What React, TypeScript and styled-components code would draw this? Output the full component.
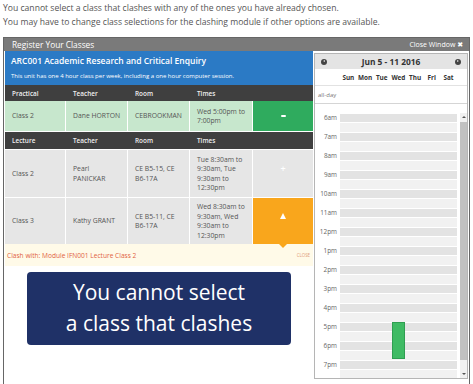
import React from "react";
import styled, { createGlobalStyle } from "styled-components";

const GlobalStyle = createGlobalStyle`
  html, body {
    margin: 0;
    padding: 0;
    background: #fff;
    overflow: hidden;
  }
  body {
    font-family: "Open Sans", "Liberation Sans", sans-serif;
    color: #555;
  }
`;

const COLS = "60px 61px 61px 62px 60px";
const HOURS = ["6am", "7am", "8am", "9am", "10am", "11am", "12pm", "1pm", "2pm", "3pm", "4pm", "5pm", "6pm", "7pm"];
const DAYS = ["Sun", "Mon", "Tue", "Wed", "Thu", "Fri", "Sat"];

type Tone = "green" | "gray" | "orange";

const cellBg = (t: Tone) => (t === "green" ? "#c7e7cd" : "#e6e6e6");
const actionBg = (t: Tone) =>
  t === "green" ? "#2fab5e" : t === "orange" ? "#f9a61c" : "#e6e6e6";

function App() {
  return (
    <>
      <GlobalStyle />
      <Intro>
        <p>You cannot select a class that clashes with any of the ones you have already chosen.</p>
        <p>You may have to change class selections for the clashing module if other options are available.</p>
      </Intro>
      <Panel>
        <TitleBar>
          <span>Register Your Classes</span>
          <CloseWin>
            Close Window <i>✖</i>
          </CloseWin>
        </TitleBar>
        <Body>
          <Main>
            <ModuleHead>
              <h2>ARC001 Academic Research and Critical Enquiry</h2>
              <p>This unit has one 4 hour class per week, including a one hour computer session.</p>
            </ModuleHead>

            <HeadRow $h={16}>
              <span>Practical</span>
              <span>Teacher</span>
              <span>Room</span>
              <span>Times</span>
              <span />
            </HeadRow>
            <DataRow $h={30}>
              <Cell $tone="green">Class 2</Cell>
              <Cell $tone="green">Dane HORTON</Cell>
              <Cell $tone="green">CEBROOKMAN</Cell>
              <Cell $tone="green">Wed 5:00pm to 7:00pm</Cell>
              <Action $tone="green">
                <Minus />
              </Action>
            </DataRow>

            <HeadRow $h={17} $gap>
              <span>Lecture</span>
              <span>Teacher</span>
              <span>Room</span>
              <span>Times</span>
              <span />
            </HeadRow>
            <DataRow $h={47} $gap>
              <Cell $tone="gray">Class 2</Cell>
              <Cell $tone="gray">Pearl PANICKAR</Cell>
              <Cell $tone="gray">CE B5-15, CE B6-17A</Cell>
              <Cell $tone="gray">Tue 8:30am to 9:30am, Tue 9:30am to 12:30pm</Cell>
              <Action $tone="gray">
                <Plus>+</Plus>
              </Action>
            </DataRow>
            <DataRow $h={46} $gap>
              <Cell $tone="gray">Class 3</Cell>
              <Cell $tone="gray">Kathy GRANT</Cell>
              <Cell $tone="gray">CE B5-11, CE B6-17A</Cell>
              <Cell $tone="gray">Wed 8:30am to 9:30am, Wed 9:30am to 12:30pm</Cell>
              <Action $tone="orange" $pointer>
                <Warn />
              </Action>
            </DataRow>
            <Clash>
              <span>Clash with: Module IFN001 Lecture Class 2</span>
              <small>CLOSE</small>
            </Clash>

            <Callout>
              You cannot select
              <br />
              a class that clashes
            </Callout>
          </Main>

          <Calendar>
            <CalHead>
              <NavDot />
              <strong>Jun 5 - 11 2016</strong>
              <NavDot $next />
            </CalHead>
            <DayRow>
              <span />
              {DAYS.map((d) => (
                <b key={d}>{d}</b>
              ))}
            </DayRow>
            <AllDay>all-day</AllDay>
            <Scroller>
              <Slots>
                {HOURS.map((h) => (
                  <Hour key={h}>
                    <label>{h}</label>
                    <Bar>
                      <i />
                      <i />
                    </Bar>
                  </Hour>
                ))}
                <Event />
              </Slots>
              <ScrollBar>
                <Arrow />
                <Thumb />
                <Arrow $down />
              </ScrollBar>
            </Scroller>
          </Calendar>
        </Body>
      </Panel>
    </>
  );
}

const Intro = styled.div`
  padding: 1px 3px 0;
  font-size: 8.6px;
  line-height: 14px;
  color: #555;
  p {
    margin: 0;
  }
`;

const Panel = styled.div`
  margin: 8px 3px 0;
  height: 360px;
  border: 1px solid #666;
  border-bottom: none;
  background: #fff;
`;

const TitleBar = styled.div`
  display: flex;
  align-items: center;
  justify-content: space-between;
  height: 13px;
  padding: 0 6px 0 8px;
  background: #7a7a7a;
  color: #fff;
  font-size: 8.3px;
`;

const CloseWin = styled.span`
  font-size: 7px;
  i {
    font-style: normal;
    font-family: "DejaVu Sans", sans-serif;
    font-size: 7px;
  }
`;

const Body = styled.div`
  display: flex;
  align-items: flex-start;
  gap: 1px;
  padding: 0 1px;
`;

const Main = styled.div`
  width: 308px;
  flex: none;
  display: flex;
  flex-direction: column;
`;

const ModuleHead = styled.div`
  height: 34px;
  box-sizing: border-box;
  padding: 4px 6px 0;
  background: #2b7ac5;
  color: #fff;
  h2 {
    margin: 0;
    font-size: 8.5px;
    font-weight: 600;
    line-height: 11px;
  }
  p {
    margin: 6px 0 0;
    font-size: 6px;
    line-height: 9px;
  }
`;

const HeadRow = styled.div<{ $h: number; $gap?: boolean }>`
  display: grid;
  grid-template-columns: ${COLS};
  column-gap: 1px;
  align-items: center;
  height: ${(p) => p.$h}px;
  margin-top: ${(p) => (p.$gap ? 1 : 0)}px;
  background: #3f3f3f;
  color: #f0f0f0;
  font-size: 6.4px;
  font-weight: 600;
  span {
    padding-left: 7px;
  }
`;

const DataRow = styled.div<{ $h: number; $gap?: boolean }>`
  display: grid;
  grid-template-columns: ${COLS};
  column-gap: 1px;
  height: ${(p) => p.$h}px;
  margin-top: ${(p) => (p.$gap ? 1 : 0)}px;
`;

const Cell = styled.div<{ $tone: Tone }>`
  display: flex;
  align-items: center;
  padding: 0 6px 0 7px;
  background: ${(p) => cellBg(p.$tone)};
  font-size: 6.8px;
  line-height: 9.5px;
  color: #555;
`;

const Action = styled.div<{ $tone: Tone; $pointer?: boolean }>`
  position: relative;
  display: flex;
  align-items: center;
  justify-content: center;
  padding-bottom: ${(p) => (p.$tone === "green" ? 0 : 10)}px;
  background: ${(p) => actionBg(p.$tone)};
  &::after {
    content: "";
    display: ${(p) => (p.$pointer ? "block" : "none")};
    position: absolute;
    left: 50%;
    bottom: -4px;
    margin-left: -4px;
    border-left: 4px solid transparent;
    border-right: 4px solid transparent;
    border-top: 4px solid #f9a61c;
    z-index: 1;
  }
`;

const Minus = styled.span`
  width: 5px;
  height: 2px;
  background: #fff;
  border-radius: 1px;
`;

const Plus = styled.span`
  color: #fff;
  font-size: 9px;
  line-height: 9px;
  font-weight: 600;
`;

const Warn = styled.span`
  width: 0;
  height: 0;
  border-left: 3.5px solid transparent;
  border-right: 3.5px solid transparent;
  border-bottom: 6px solid #fff;
`;

const Clash = styled.div`
  display: flex;
  align-items: center;
  justify-content: space-between;
  height: 22px;
  padding: 0 3px 0 2px;
  background: #fffae8;
  color: #df5f3f;
  font-size: 6.6px;
  small {
    font-size: 4.4px;
    color: #e29a7c;
  }
`;

const Callout = styled.div`
  margin: 6px 22px 0;
  height: 73px;
  box-sizing: border-box;
  padding-top: 5px;
  border-radius: 4px;
  background: #1f3167;
  color: #fff;
  font-size: 21px;
  line-height: 31px;
  text-align: center;
`;

const Calendar = styled.div`
  width: 154px;
  height: 326px;
  flex: none;
  box-sizing: border-box;
  margin-top: 2px;
  border: 1px solid #b5b5b5;
  background: #fff;
  display: flex;
  flex-direction: column;
  overflow: hidden;
`;

const CalHead = styled.div`
  display: flex;
  align-items: center;
  justify-content: space-between;
  height: 15px;
  padding: 0 6px 0 6px;
  background: #e4e4e4;
  strong {
    font-size: 8.4px;
    color: #333;
  }
`;

const NavDot = styled.span<{ $next?: boolean }>`
  position: relative;
  width: 6px;
  height: 6px;
  border-radius: 50%;
  background: #444;
  &::after {
    content: "";
    position: absolute;
    top: 1.5px;
    left: ${(p) => (p.$next ? 2.3 : 1.5)}px;
    border-top: 1.5px solid transparent;
    border-bottom: 1.5px solid transparent;
    ${(p) => (p.$next ? "border-left" : "border-right")}: 2px solid #ddd;
  }
`;

const DayRow = styled.div`
  display: grid;
  grid-template-columns: 25px repeat(7, 16.7px) 1fr;
  align-items: center;
  height: 16px;
  border-bottom: 1px solid #e2e2e2;
  b {
    text-align: center;
    font-size: 6.4px;
    color: #333;
  }
`;

const AllDay = styled.div`
  height: 17px;
  padding: 0 3px;
  display: flex;
  align-items: center;
  font-size: 6px;
  color: #777;
  border-bottom: 1px solid #d5d5d5;
`;

const Scroller = styled.div`
  display: flex;
  gap: 3px;
  margin-top: 10px;
  flex: 1;
  min-height: 0;
`;

const Slots = styled.div`
  position: relative;
  width: 142px;
`;

const Hour = styled.div`
  display: grid;
  grid-template-columns: 25px 117px;
  height: 19px;
  label {
    font-size: 6.4px;
    line-height: 8px;
    color: #666;
    text-align: right;
    padding-right: 3px;
  }
`;

const Bar = styled.div`
  display: flex;
  flex-direction: column;
  gap: 1px;
  i {
    display: block;
    height: 8px;
    background: #e3e3e3;
  }
  i + i {
    height: 9px;
    background: #f1f1f1;
  }
`;

const Event = styled.div`
  position: absolute;
  left: 77px;
  top: 208px;
  width: 11px;
  height: 35px;
  background: #3fbb64;
  border: 1px solid #2f9e51;
`;

const ScrollBar = styled.div`
  width: 7px;
  display: flex;
  flex-direction: column;
  align-items: center;
  background: #f1f1f1;
  margin-top: -1px;
`;

const Arrow = styled.span<{ $down?: boolean }>`
  margin: 3px 0;
  border-left: 2px solid transparent;
  border-right: 2px solid transparent;
  ${(p) => (p.$down ? "border-top" : "border-bottom")}: 2px solid #555;
`;

const Thumb = styled.div`
  flex: 1;
  width: 7px;
  background: #c1c1c1;
  margin: 1px 0 10px;
`;

export default App;
